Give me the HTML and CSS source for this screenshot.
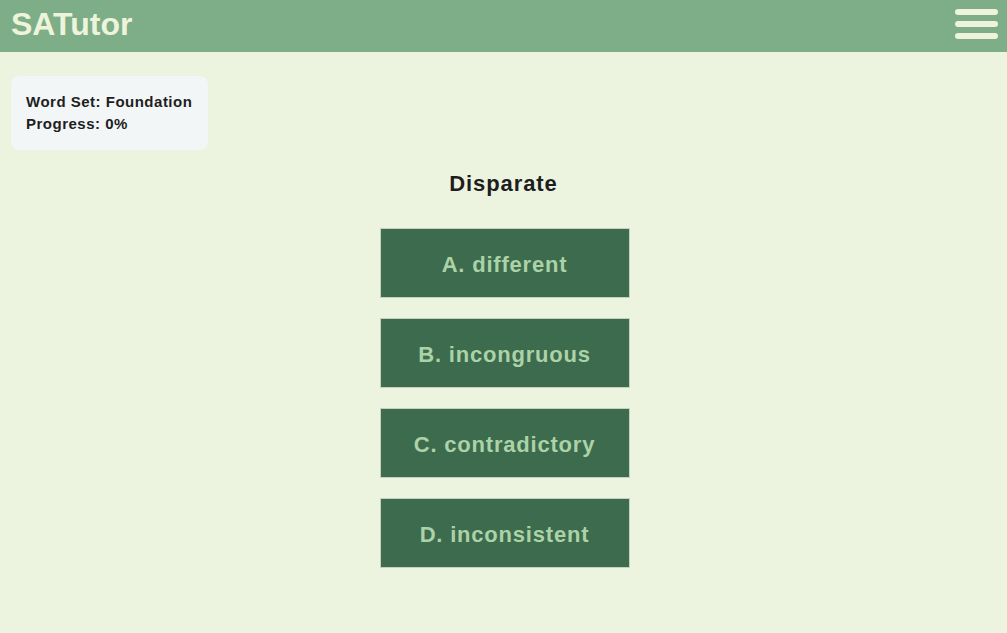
FILE: index.html
```html
<!DOCTYPE html>
<html>
<head>
<meta charset="utf-8">
<link rel="stylesheet" href="styles.css">
</head>
<body>
<header class="topbar">
  <div class="logo">SATutor</div>
  <div class="menu"><span></span><span></span><span></span></div>
</header>
<main class="content">
  <div class="info">
    <div>Word Set: Foundation</div>
    <div>Progress: 0%</div>
  </div>
  <h1 class="word">Disparate</h1>
  <div class="choices">
    <button class="choice">A. different</button>
    <button class="choice">B. incongruous</button>
    <button class="choice">C. contradictory</button>
    <button class="choice">D. inconsistent</button>
  </div>
</main>
</body>
</html>
```
FILE: styles.css
```css
html, body {
  margin: 0;
  padding: 0;
  background: #ecf3df;
  font-family: "Liberation Sans", Arial, sans-serif;
}
.topbar {
  height: 52px;
  background: #7dae87;
  display: flex;
  align-items: center;
  justify-content: space-between;
  padding: 0 9px 0 11px;
}
.logo {
  color: #eef4dc;
  font-weight: bold;
  font-size: 32px;
  letter-spacing: 0;
  margin-top: -4px;
}
.menu {
  display: flex;
  flex-direction: column;
  gap: 6px;
  margin-top: -4px;
}
.menu span {
  display: block;
  width: 43px;
  height: 6px;
  border-radius: 3px;
  background: #eef4dc;
}
.content {
  padding: 24px 11px;
}
.info {
  width: 167px;
  background: #f2f6f7;
  border-radius: 8px;
  padding: 15px;
  font-size: 15px;
  font-weight: bold;
  letter-spacing: 0.5px;
  line-height: 22px;
  color: #1e1e1e;
  white-space: nowrap;
}
.word {
  text-align: center;
  font-size: 22px;
  font-weight: bold;
  letter-spacing: 0.9px;
  color: #1e1e1e;
  margin: 20px 0 30px;
  line-height: 28px;
}
.choices {
  display: flex;
  flex-direction: column;
  align-items: center;
  gap: 20px;
}
.choice {
  width: 250px;
  height: 70px;
  padding: 3px 0 0;
  background: #3d6b4e;
  border: 1px solid #c8cfc4;
  color: #acd2a8;
  font-family: "Liberation Sans", Arial, sans-serif;
  font-weight: bold;
  font-size: 22px;
  letter-spacing: 0.8px;
  margin-left: 2px;
}
```
